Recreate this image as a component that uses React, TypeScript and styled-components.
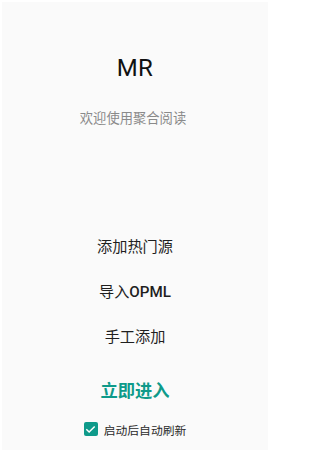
import React, { useState } from "react";
import styled, { createGlobalStyle } from "styled-components";

const Global = createGlobalStyle`
  html, body { margin: 0; padding: 0; background: #ffffff; }
  body { font-family: Roboto, "Noto Sans CJK SC", "Noto Sans", sans-serif; }
  * { box-sizing: border-box; }
`;

const Screen = styled.div`
  width: 270px;
  height: 450px;
  border: 2px solid #ffffff;
  border-bottom: none;
  background: #fafafa;
  display: flex;
  flex-direction: column;
  align-items: center;
  padding-top: 46px;
`;

const Logo = styled.div`
  height: 40px;
  line-height: 40px;
  font-size: 24px;
  color: #111111;
  letter-spacing: 0.5px;
`;

const Welcome = styled.div`
  margin-top: 21px;
  margin-right: 4px;
  height: 20px;
  line-height: 20px;
  font-size: 13.3px;
  color: #8a8a8a;
`;

const Menu = styled.div`
  margin-top: 96px;
  display: flex;
  flex-direction: column;
  align-items: center;
`;

const MenuItem = styled.button`
  height: 45px;
  line-height: 45px;
  padding: 0 16px;
  border: none;
  background: transparent;
  font-family: inherit;
  font-size: 15.2px;
  color: #1f1f1f;
  cursor: pointer;
`;

const Latin = styled.span`
  font-weight: 500;
`;

const Enter = styled.button`
  margin-top: 9px;
  height: 44px;
  line-height: 44px;
  padding: 0 16px;
  border: none;
  background: transparent;
  font-family: inherit;
  font-size: 17.3px;
  font-weight: 700;
  color: #0e9a8a;
  cursor: pointer;
`;

const CheckRow = styled.label`
  margin-top: 6px;
  height: 20px;
  display: flex;
  align-items: center;
  gap: 6px;
  font-size: 11.8px;
  color: #2a2a2a;
  cursor: pointer;
`;

const Box = styled.span<{ $on: boolean }>`
  width: 14px;
  height: 14px;
  border-radius: 2px;
  background: ${(p) => (p.$on ? "#0e9a8a" : "transparent")};
  border: ${(p) => (p.$on ? "none" : "2px solid #777")};
  display: flex;
  align-items: center;
  justify-content: center;
`;

const Hidden = styled.input`
  display: none;
`;

export default function App() {
  const [on, setOn] = useState(true);
  return (
    <>
      <Global />
      <Screen>
        <Logo>MR</Logo>
        <Welcome>欢迎使用聚合阅读</Welcome>
        <Menu>
          <MenuItem>添加热门源</MenuItem>
          <MenuItem>
            导入<Latin>OPML</Latin>
          </MenuItem>
          <MenuItem>手工添加</MenuItem>
        </Menu>
        <Enter>立即进入</Enter>
        <CheckRow>
          <Hidden type="checkbox" checked={on} onChange={() => setOn(!on)} />
          <Box $on={on}>
            {on && (
              <svg width="11" height="11" viewBox="0 0 24 24">
                <path d="M4 12.5l5 5L20 6.5" fill="none" stroke="#fff" strokeWidth="3.2" strokeLinecap="square" />
              </svg>
            )}
          </Box>
          启动后自动刷新
        </CheckRow>
      </Screen>
    </>
  );
}
